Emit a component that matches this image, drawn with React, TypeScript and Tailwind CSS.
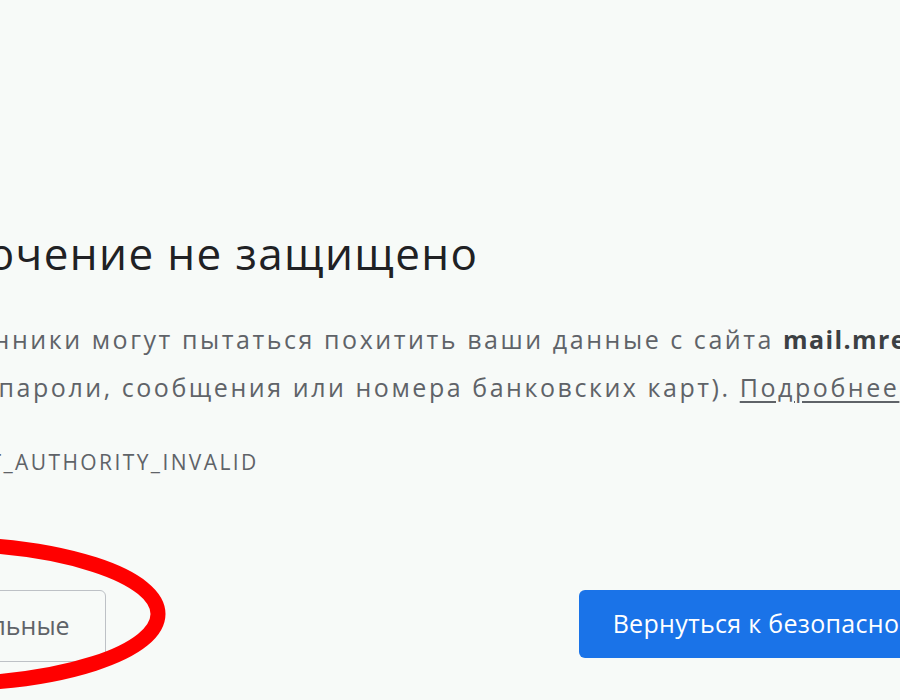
import React from "react";

const font = { fontFamily: '"Open Sans", "Noto Sans", sans-serif' };

function Ring() {
  // hand-drawn red marker around the "advanced" button
  return (
    <svg
      className="pointer-events-none absolute inset-0"
      width={900}
      height={700}
      viewBox="0 0 900 700"
    >
      <ellipse cx={-60} cy={614} rx={218} ry={70} fill="none" stroke="#ff0000" strokeWidth={15} />
    </svg>
  );
}

export default function App() {
  return (
    <div className="relative h-[700px] w-[900px] overflow-hidden bg-[#f7faf8]" style={font}>
      <div className="ml-[-174px] w-[1400px] pt-[226px]">
        <h1 className="ml-[13px] whitespace-nowrap text-[44px] font-normal leading-[55px] tracking-[1.4px] text-[#202124]">
          Подключение не защищено
        </h1>
        <p className="mt-[34px] whitespace-nowrap text-[25px] leading-[48px] tracking-[2.55px] text-[#5f6368]">
          Злоумышленники могут пытаться похитить ваши данные с сайта{" "}
          <span className="font-bold tracking-[1.4px] text-[#3c4043]">mail.mrexpo.ru</span>
          <br />
          (например, пароли, сообщения или номера банковских карт).{" "}
          <a href="#" className="underline underline-offset-4">
            Подробнее
          </a>
        </p>
        <div className="mt-[34px] whitespace-nowrap text-[21px] leading-[34px] tracking-[2.4px] text-[#5f6368]">
          NET::ERR_CERT_AUTHORITY_INVALID
        </div>
        <div className="mt-[111px] flex items-start">
          <button className="h-[72px] whitespace-nowrap rounded-md border border-[#bdc1c6] pl-[30px] pr-[35px] text-[25px] text-[#5f6368]">
            Дополнительные
          </button>
          <button className="ml-[473px] h-[68px] whitespace-nowrap rounded-md bg-[#1a73e8] px-[34px] text-[25px] tracking-[0.3px] text-white">
            Вернуться к безопасности
          </button>
        </div>
      </div>
      <Ring />
    </div>
  );
}
